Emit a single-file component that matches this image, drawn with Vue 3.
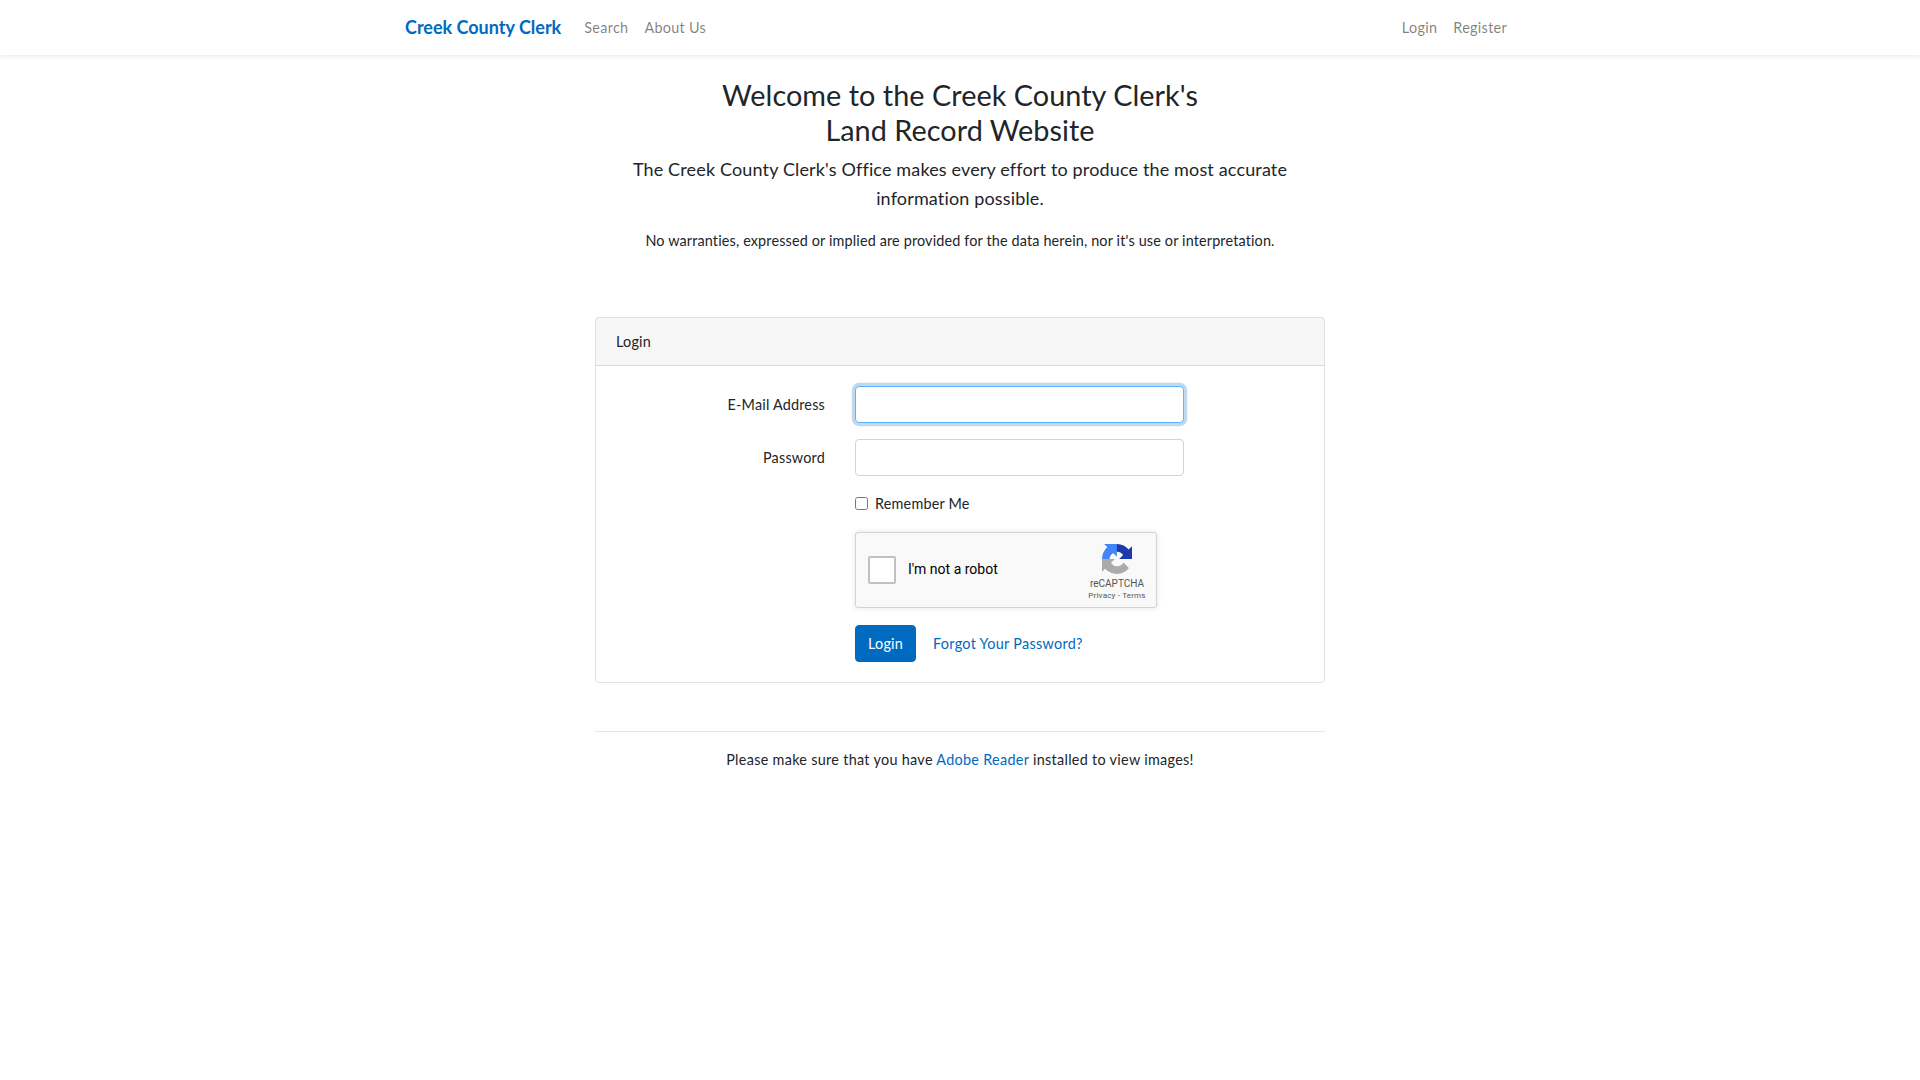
<script setup>
const navLeft = ['Search', 'About Us']
const navRight = ['Login', 'Register']
</script>

<template>
  <div class="page">
    <nav class="navbar">
      <div class="nav-inner">
        <a class="brand" href="#">Creek County Clerk</a>
        <a v-for="item in navLeft" :key="item" class="nav-link" href="#">{{ item }}</a>
        <div class="nav-right">
          <a v-for="item in navRight" :key="item" class="nav-link" href="#">{{ item }}</a>
        </div>
      </div>
    </nav>

    <main class="content">
      <div class="intro">
        <h2>Welcome to the Creek County Clerk's<br />Land Record Website</h2>
        <p class="lead">The Creek County Clerk's Office makes every effort to produce the most accurate information possible.</p>
        <p class="note">No warranties, expressed or implied are provided for the data herein, nor it's use or interpretation.</p>
      </div>

      <div class="card">
        <div class="card-header">Login</div>
        <form class="card-body" @submit.prevent>
          <div class="form-row">
            <label class="form-label" for="email">E-Mail Address</label>
            <input id="email" class="form-input focused" type="email" />
          </div>
          <div class="form-row">
            <label class="form-label" for="password">Password</label>
            <input id="password" class="form-input" type="password" />
          </div>
          <div class="form-row remember-row">
            <span></span>
            <label class="remember"><input type="checkbox" />Remember Me</label>
          </div>
          <div class="form-row">
            <span></span>
            <div class="captcha">
              <div class="captcha-box"></div>
              <div class="captcha-text">I'm not a robot</div>
              <div class="captcha-brand">
                <svg width="30" height="30" viewBox="0 0 64 64">
                  <path d="M64 31.955l-.033-1.37V4.687l-7.16 7.16C50.948 4.674 42.033.093 32.05.093c-10.4 0-19.622 4.96-25.458 12.64l11.736 11.86a15.55 15.55 0 0 1 4.754-5.334c2.05-1.6 4.952-2.906 8.968-2.906.485 0 .86.057 1.135.163 4.976.393 9.288 3.14 11.828 7.124l-8.307 8.307c10.522-.04 22.4-.066 27.295.006" fill="#1c3aa9" />
                  <path d="M31.862.002l-1.37.033H4.594l7.16 7.16C4.58 13.055 0 21.97 0 31.953c0 10.4 4.96 19.622 12.64 25.458L24.5 45.676a15.55 15.55 0 0 1-5.334-4.754c-1.6-2.05-2.906-4.952-2.906-8.968 0-.485.057-.86.163-1.135.393-4.976 3.14-9.288 7.124-11.828l8.307 8.307c-.04-10.522-.066-22.4.006-27.295" fill="#4285f4" />
                  <path d="M.002 31.953l.033 1.37v25.898l7.16-7.16c5.86 7.173 14.775 11.754 24.757 11.754 10.4 0 19.622-4.96 25.458-12.64l-11.736-11.86a15.55 15.55 0 0 1-4.754 5.334c-2.05 1.6-4.952 2.906-8.968 2.906-.485 0-.86-.057-1.135-.163-4.976-.393-9.288-3.14-11.828-7.124l8.307-8.307c-10.522.04-22.4.066-27.295-.006" fill="#ababab" />
                </svg>
                <div class="captcha-name">reCAPTCHA</div>
                <div class="captcha-links">Privacy - Terms</div>
              </div>
            </div>
          </div>
          <div class="form-row actions-row">
            <span></span>
            <div class="actions">
              <button class="btn" type="submit">Login</button>
              <a class="forgot" href="#">Forgot Your Password?</a>
            </div>
          </div>
        </form>
      </div>

      <hr class="divider" />
      <p class="adobe">Please make sure that you have <a href="#">Adobe Reader</a> installed to view images!</p>
    </main>
  </div>
</template>

<style>
html,
body {
  margin: 0;
  background: #fff;
}
</style>

<style scoped>
.page {
  min-height: 1080px;
  font-family: "Lato", "Open Sans", sans-serif;
  font-size: 14.4px;
  line-height: 1.6;
  color: #212529;
  letter-spacing: 0.2px;
}

a {
  text-decoration: none;
}

.navbar {
  height: 55px;
  background: #fff;
  box-shadow: 0 2px 4px rgba(0, 0, 0, 0.075);
}

.nav-inner {
  width: 1110px;
  height: 100%;
  margin: 0 auto;
  display: flex;
  align-items: center;
}

.brand {
  margin-right: 15px;
  font-size: 18px;
  font-weight: 700;
  color: #0069c0;
  letter-spacing: 0;
}

.nav-link {
  padding: 0 8px;
  color: rgba(0, 0, 0, 0.5);
  letter-spacing: 0.3px;
}

.nav-right {
  margin-left: auto;
  display: flex;
}

.content {
  width: 730px;
  margin: 0 auto;
}

.intro {
  padding-top: 23px;
  text-align: center;
}

h2 {
  margin: 0 0 8px;
  font-size: 28.8px;
  font-weight: 400;
  line-height: 1.2;
  letter-spacing: 0.05px;
}

.lead {
  margin: 0 0 16px;
  font-size: 18px;
  letter-spacing: 0.15px;
}

.note {
  margin: 0 0 65px;
  letter-spacing: 0.15px;
}

.card {
  border: 1px solid rgba(0, 0, 0, 0.125);
  border-radius: 4px;
}

.card-header {
  padding: 12px 20px;
  background: rgba(0, 0, 0, 0.03);
  border-bottom: 1px solid rgba(0, 0, 0, 0.125);
}

.card-body {
  padding: 20px;
}

.form-row {
  display: grid;
  grid-template-columns: 209px 329px;
  column-gap: 30px;
  align-items: center;
  margin-bottom: 16px;
}

.form-label {
  text-align: right;
}

.form-input {
  box-sizing: border-box;
  width: 329px;
  height: 37px;
  padding: 6px 12px;
  border: 1px solid #ced4da;
  border-radius: 4px;
  background: #fff;
  outline: none;
}

.focused {
  border-color: #5eb3ff;
  box-shadow: 0 0 0 3.2px rgba(0, 105, 192, 0.25);
}

.remember {
  display: flex;
  align-items: center;
}

.remember input {
  width: 13px;
  height: 13px;
  margin: 0 7px 0 0;
}

.captcha {
  box-sizing: border-box;
  width: 302px;
  height: 76px;
  margin: 1px 0;
  display: flex;
  align-items: center;
  background: #f9f9f9;
  border: 1px solid #d3d3d3;
  border-radius: 3px;
  box-shadow: 0 0 4px 1px rgba(0, 0, 0, 0.08);
  font-family: "Roboto", sans-serif;
  letter-spacing: 0;
  color: #000;
}

.captcha-box {
  box-sizing: border-box;
  width: 28px;
  height: 28px;
  margin-left: 12px;
  background: #fff;
  border: 2px solid #c1c1c1;
  border-radius: 2px;
}

.captcha-text {
  margin-left: 12px;
  font-size: 14px;
  line-height: 17px;
}

.captcha-brand {
  margin-left: auto;
  width: 70px;
  margin-right: 4px;
  padding-top: 5px;
  display: flex;
  flex-direction: column;
  align-items: center;
  color: #555;
}

.captcha-name {
  margin-top: 4px;
  font-size: 10px;
  line-height: 12px;
}

.captcha-links {
  margin-top: 1px;
  font-size: 8px;
  line-height: 10px;
  letter-spacing: 0.2px;
}

.actions {
  display: flex;
  align-items: center;
}

.actions-row {
  margin-bottom: 0;
}

.btn {
  width: 61px;
  height: 37px;
  padding: 0;
  border: 1px solid #0069c0;
  border-radius: 4px;
  background: #0069c0;
  color: #fff;
  font: inherit;
  letter-spacing: inherit;
}

.forgot {
  margin-left: 17px;
  color: #0069c0;
  letter-spacing: 0.3px;
}

.divider {
  margin: 48px 0 0;
  border: 0;
  border-top: 1px solid rgba(0, 0, 0, 0.1);
}

.adobe {
  margin: 16px 0 0;
  text-align: center;
  letter-spacing: 0.3px;
}

.adobe a {
  color: #0069c0;
}
</style>
